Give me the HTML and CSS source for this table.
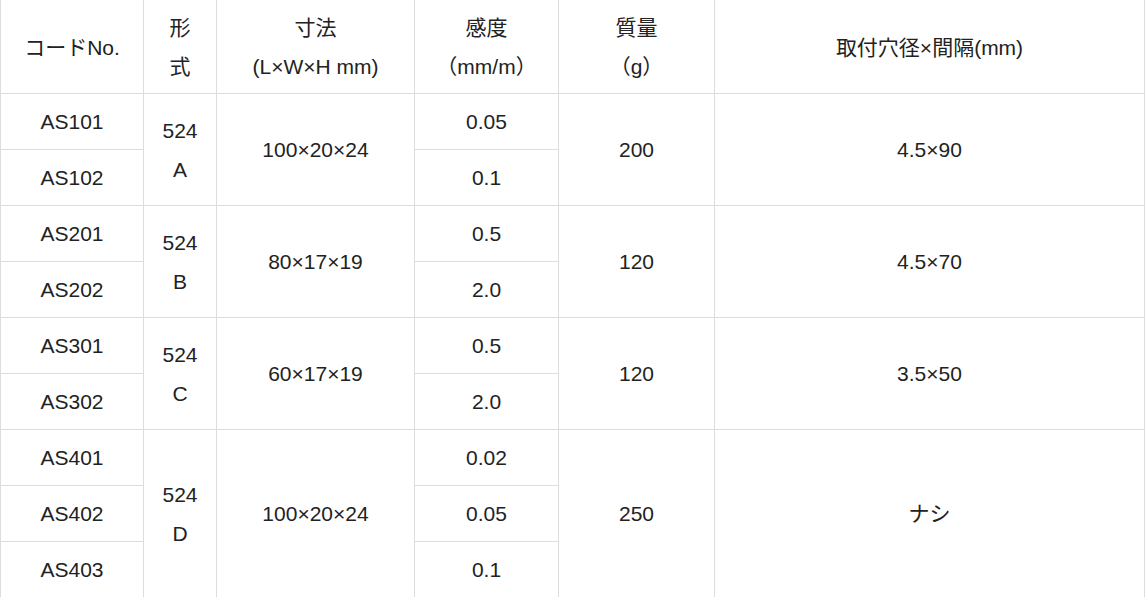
FILE: index.html
```html
<!DOCTYPE html>
<html lang="ja">
<head>
<meta charset="utf-8">
<title>仕様表</title>
<link rel="stylesheet" href="styles.css">
</head>
<body>
<table class="spec">
  <colgroup>
    <col class="c-code">
    <col class="c-type">
    <col class="c-size">
    <col class="c-sens">
    <col class="c-mass">
    <col class="c-hole">
  </colgroup>
  <thead>
    <tr>
      <th>コードNo.</th>
      <th>形<br>式</th>
      <th>寸法<br>(L×W×H mm)</th>
      <th>感度<br>（mm/m）</th>
      <th>質量<br>（g）</th>
      <th>取付穴径×間隔(mm)</th>
    </tr>
  </thead>
  <tbody>
    <tr>
      <td>AS101</td>
      <td rowspan="2">524<br>A</td>
      <td rowspan="2">100×20×24</td>
      <td>0.05</td>
      <td rowspan="2">200</td>
      <td rowspan="2">4.5×90</td>
    </tr>
    <tr>
      <td>AS102</td>
      <td>0.1</td>
    </tr>
    <tr>
      <td>AS201</td>
      <td rowspan="2">524<br>B</td>
      <td rowspan="2">80×17×19</td>
      <td>0.5</td>
      <td rowspan="2">120</td>
      <td rowspan="2">4.5×70</td>
    </tr>
    <tr>
      <td>AS202</td>
      <td>2.0</td>
    </tr>
    <tr>
      <td>AS301</td>
      <td rowspan="2">524<br>C</td>
      <td rowspan="2">60×17×19</td>
      <td>0.5</td>
      <td rowspan="2">120</td>
      <td rowspan="2">3.5×50</td>
    </tr>
    <tr>
      <td>AS302</td>
      <td>2.0</td>
    </tr>
    <tr>
      <td>AS401</td>
      <td rowspan="3">524<br>D</td>
      <td rowspan="3">100×20×24</td>
      <td>0.02</td>
      <td rowspan="3">250</td>
      <td rowspan="3">ナシ</td>
    </tr>
    <tr>
      <td>AS402</td>
      <td>0.05</td>
    </tr>
    <tr>
      <td>AS403</td>
      <td>0.1</td>
    </tr>
  </tbody>
</table>
</body>
</html>
```

FILE: styles.css
```css
html, body {
  margin: 0;
  padding: 0;
  background: #ffffff;
}

body {
  font-family: "Liberation Sans", Arial, "Noto Sans CJK JP", sans-serif;
  font-size: 21px;
  color: #222222;
}

.spec {
  border-collapse: collapse;
  table-layout: fixed;
  width: 1144px;
}

.c-code { width: 143px; }
.c-type { width: 73px; }
.c-size { width: 198px; }
.c-sens { width: 144px; }
.c-mass { width: 156px; }
.c-hole { width: 430px; }

.spec th,
.spec td {
  border: 1px solid #dddddd;
  text-align: center;
  vertical-align: middle;
  line-height: 39px;
  padding: 8px 0;
  font-weight: normal;
}

.spec th {
  border-top: none;
  padding: 8px 0 7px;
}
```
